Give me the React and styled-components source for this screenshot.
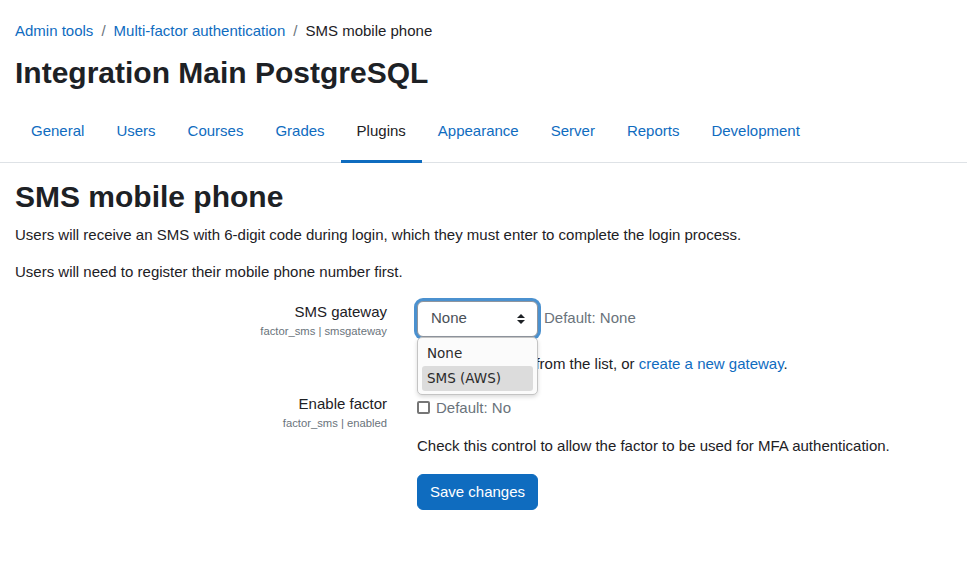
import React from "react";
import styled, { createGlobalStyle } from "styled-components";

const GlobalStyle = createGlobalStyle`
  * { box-sizing: border-box; }
  body {
    margin: 0;
    background: #fff;
    color: #1d2125;
    font-family: "Liberation Sans", Arial, sans-serif;
    font-size: 15px;
    line-height: 1.5;
  }
  a { color: #0f6cbf; text-decoration: none; }
`;

const tabs = ["General", "Users", "Courses", "Grades", "Plugins", "Appearance", "Server", "Reports", "Development"];

export default function App() {
  return (
    <Page>
      <GlobalStyle />
      <Header>
        <Breadcrumb>
          <a href="#">Admin tools</a>
          <Sep>/</Sep>
          <a href="#">Multi-factor authentication</a>
          <Sep>/</Sep>
          <span>SMS mobile phone</span>
        </Breadcrumb>
        <Title>Integration Main PostgreSQL</Title>
      </Header>

      <TabBar>
        {tabs.map(t => (
          <Tab key={t} active={t === "Plugins"}>{t}</Tab>
        ))}
      </TabBar>

      <Main>
        <Heading>SMS mobile phone</Heading>
        <Para>Users will receive an SMS with 6-digit code during login, which they must enter to complete the login process.</Para>
        <Para>Users will need to register their mobile phone number first.</Para>

        <Form>
          <Row>
            <LabelCol>
              <Label>SMS gateway</Label>
              <ShortName>factor_sms | smsgateway</ShortName>
            </LabelCol>
            <FieldCol>
              <Inline>
                <SelectWrap>
                  <SelectBox>
                    None
                    <Chevron width="8" height="12" viewBox="0 0 8 12">
                      <path d="M0 5 L4 1 L8 5 Z M0 7 L4 11 L8 7 Z" fill="#1d2125" />
                    </Chevron>
                  </SelectBox>
                  <Listbox>
                    <Option>None</Option>
                    <Option selected>SMS (AWS)</Option>
                  </Listbox>
                </SelectWrap>
                <Default>Default: None</Default>
              </Inline>
              <Help>
                Select a gateway from the list, or <a href="#">create a new gateway</a>.
              </Help>
            </FieldCol>
          </Row>

          <Row>
            <LabelCol>
              <Label>Enable factor</Label>
              <ShortName>factor_sms | enabled</ShortName>
            </LabelCol>
            <FieldCol>
              <CheckLine>
                <Checkbox />
                <Default>Default: No</Default>
              </CheckLine>
              <Help spaced>Check this control to allow the factor to be used for MFA authentication.</Help>
            </FieldCol>
          </Row>

          <Row>
            <LabelCol />
            <FieldCol>
              <Button>Save changes</Button>
            </FieldCol>
          </Row>
        </Form>
      </Main>
    </Page>
  );
}

const Page = styled.div`
  min-height: 562px;
`;

const Header = styled.header`
  padding: 19px 15px 0;
`;

const Breadcrumb = styled.nav`
  display: flex;
  align-items: center;
  height: 24px;
  color: #1d2125;
`;

const Sep = styled.span`
  color: #6a737b;
  padding: 0 8px;
`;

const Title = styled.h1`
  margin: 12px 0 0;
  font-size: 30px;
  font-weight: 700;
  line-height: 1.2;
`;

const TabBar = styled.nav`
  display: flex;
  margin-top: 10px;
  padding: 0 15px;
  border-bottom: 1px solid #dee2e6;
`;

const Tab = styled.a`
  padding: 19px 16px 17px;
  color: ${p => (p.active ? "#1d2125" : "#0f6cbf")};
  border-bottom: 3px solid ${p => (p.active ? "#0f6cbf" : "transparent")};
  margin-bottom: -1px;
`;

const Main = styled.main`
  padding: 0 15px;
`;

const Heading = styled.h2`
  margin: 16px 0 0;
  font-size: 30px;
  font-weight: 700;
  line-height: 1.2;
`;

const Para = styled.p`
  margin: 9px 0 15px;
  & + & { margin-top: 0; }
`;

const Form = styled.form`
  margin-top: 14px;
  display: flex;
  flex-direction: column;
`;

const Row = styled.div`
  display: grid;
  grid-template-columns: 372px 1fr;
  column-gap: 30px;
  margin-bottom: 16px;
`;

const LabelCol = styled.div`
  text-align: right;
  padding-top: 2px;
`;

const Label = styled.div`
  line-height: 22px;
`;

const ShortName = styled.div`
  font-size: 11.25px;
  color: #6a737b;
  line-height: 16px;
`;

const FieldCol = styled.div`
  display: flex;
  flex-direction: column;
  align-items: flex-start;
`;

const Inline = styled.div`
  display: flex;
  align-items: center;
  padding-top: 2px;
`;

const SelectWrap = styled.div`
  position: relative;
`;

const SelectBox = styled.div`
  width: 121px;
  height: 36px;
  padding: 0 12px 0 13px;
  display: flex;
  align-items: center;
  justify-content: space-between;
  color: #495057;
  background: #fff;
  border: 1px solid #8f959e;
  border-radius: 6px;
  box-shadow: 0 0 0 3px rgba(15, 108, 191, 0.75);
`;

const Chevron = styled.svg`
  display: block;
`;

const Listbox = styled.div`
  position: absolute;
  top: 36px;
  left: 0;
  width: 121px;
  padding: 3px 4px 3px;
  background: #fbfbfb;
  border: 1px solid #c4c4c4;
  border-radius: 5px;
  box-shadow: 0 2px 4px rgba(0, 0, 0, 0.15);
  font-family: "DejaVu Sans", "Noto Sans", sans-serif;
  font-size: 13.5px;
  z-index: 2;
`;

const Option = styled.div`
  height: 25px;
  line-height: 25px;
  padding: 0 5px;
  border-radius: 3px;
  color: #2b2b2b;
  background: ${p => (p.selected ? "#dcdcdc" : "transparent")};
`;

const Default = styled.span`
  color: #6a737b;
  margin-left: 6px;
`;

const Help = styled.div`
  margin-top: 16px;
  line-height: 22px;
`;

const CheckLine = styled.div`
  display: flex;
  align-items: center;
  padding-top: 6px;
  line-height: 22px;
`;

const Checkbox = styled.span`
  display: inline-block;
  width: 13px;
  height: 13px;
  border: 2px solid #767676;
  border-radius: 2px;
  background: #fff;
`;

const Button = styled.button`
  margin-top: 1px;
  width: 121px;
  height: 36px;
  padding: 0;
  font-family: inherit;
  font-size: 15px;
  color: #fff;
  background: #0f6cbf;
  border: 1px solid #0f6cbf;
  border-radius: 6px;
`;
